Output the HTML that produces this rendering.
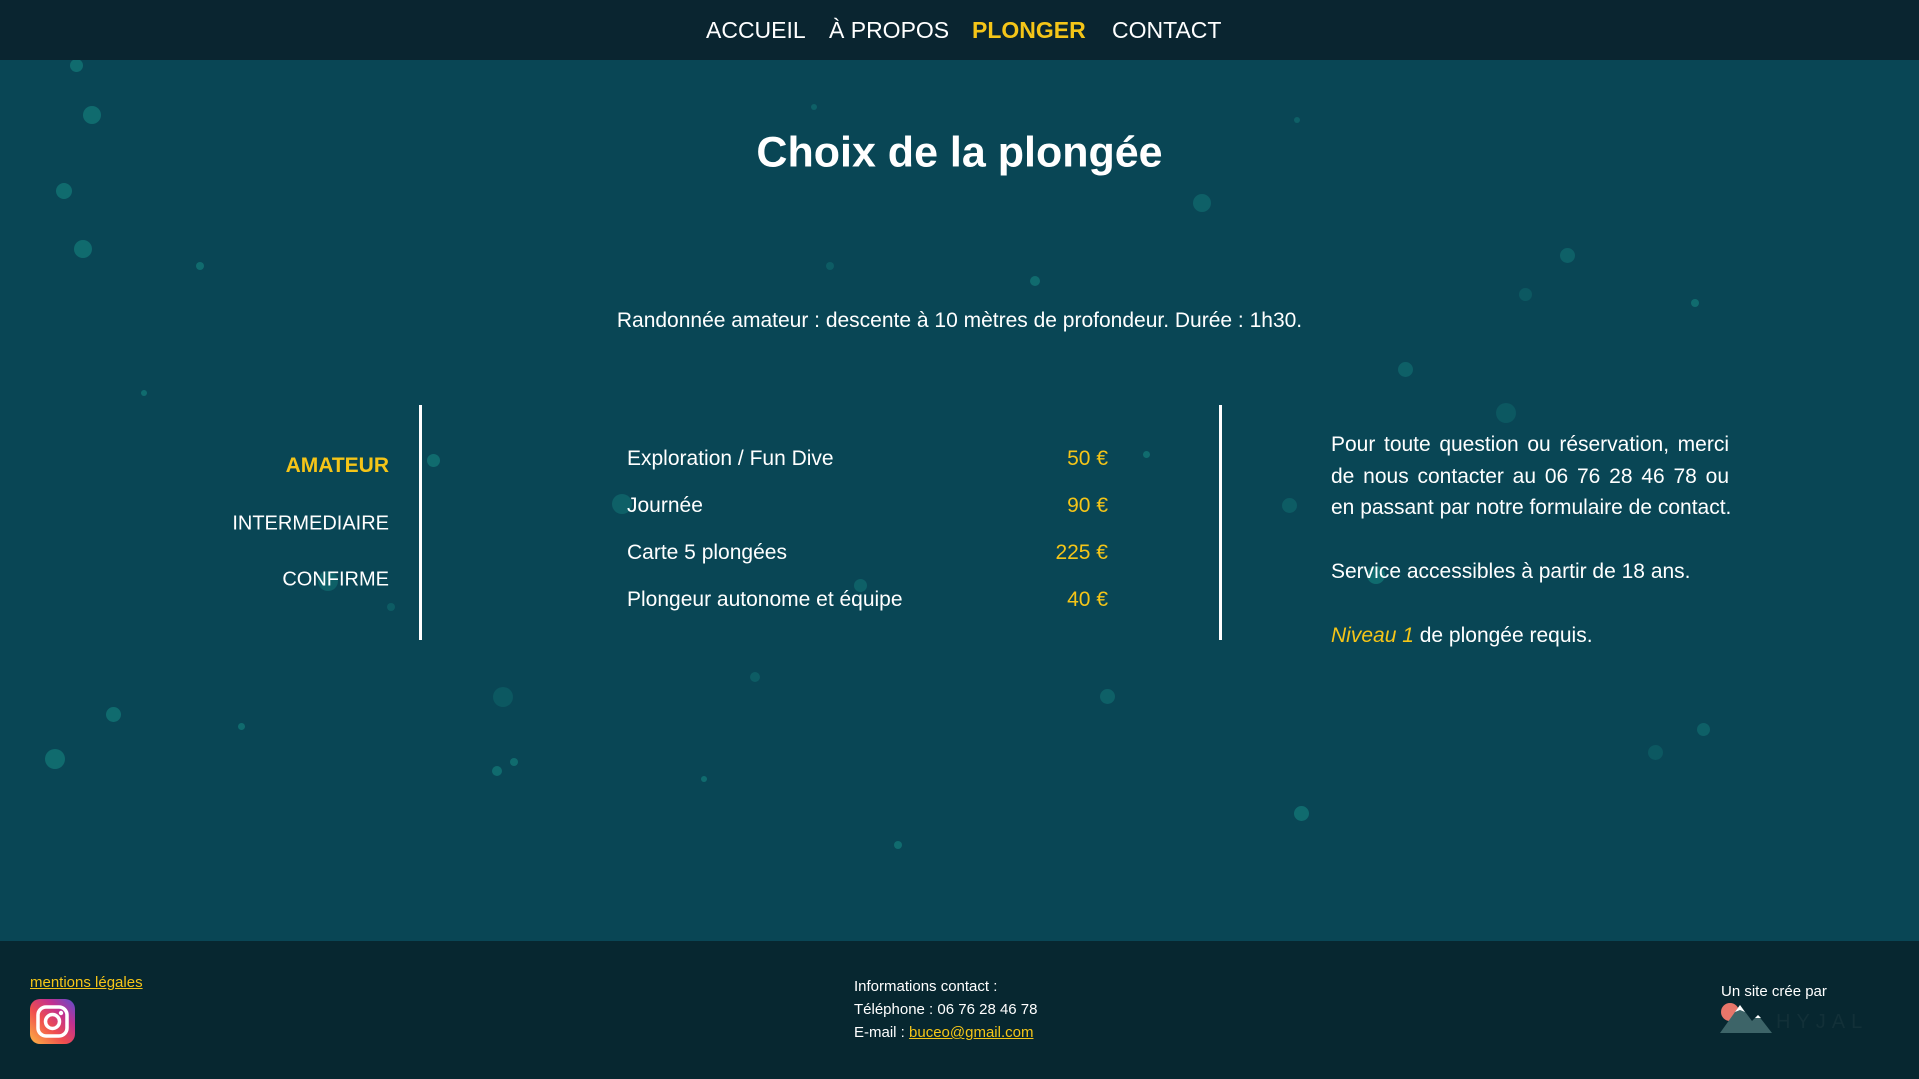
<!DOCTYPE html>
<html><head><meta charset="utf-8"><style>
*{margin:0;padding:0;box-sizing:border-box}
body{width:1919px;height:1079px;overflow:hidden;background:#094655;font-family:"Liberation Sans",sans-serif;color:#fff;position:relative}
.a{position:absolute;white-space:nowrap}
nav{position:absolute;left:0;top:0;width:1919px;height:60px;background:#0a2530}
.nv{font-size:23px;top:17px}
.y{color:#f5c518}
.b{position:absolute;border-radius:50%;background:#127273;opacity:.85}
.c{transform:translateY(-50%)}
.rt{position:absolute;left:1331px;width:398px;font-size:21px;text-align:justify;text-align-last:justify;white-space:nowrap}
footer{position:absolute;left:0;top:941px;width:1919px;height:138px;background:#072730}
.f{font-size:15px}
</style></head><body>
<div id="bubbles">
<div class="b" style="left:70px;top:59px;width:13px;height:13px"></div>
<div class="b" style="left:83px;top:106px;width:18px;height:18px"></div>
<div class="b" style="left:56px;top:183px;width:16px;height:16px"></div>
<div class="b" style="left:74px;top:240px;width:18px;height:18px"></div>
<div class="b" style="left:196px;top:262px;width:8px;height:8px"></div>
<div class="b" style="left:141px;top:390px;width:6px;height:6px"></div>
<div class="b" style="left:106px;top:707px;width:15px;height:15px"></div>
<div class="b" style="left:45px;top:749px;width:20px;height:20px"></div>
<div class="b" style="left:238px;top:723px;width:7px;height:7px"></div>
<div class="b" style="left:492px;top:766px;width:10px;height:10px"></div>
<div class="b" style="left:510px;top:758px;width:8px;height:8px"></div>
<div class="b" style="left:493px;top:687px;width:20px;height:20px;opacity:.4"></div>
<div class="b" style="left:701px;top:776px;width:6px;height:6px"></div>
<div class="b" style="left:750px;top:672px;width:10px;height:10px;opacity:.5"></div>
<div class="b" style="left:894px;top:841px;width:8px;height:8px"></div>
<div class="b" style="left:1100px;top:689px;width:15px;height:15px;opacity:.6"></div>
<div class="b" style="left:1294px;top:806px;width:15px;height:15px"></div>
<div class="b" style="left:1648px;top:745px;width:15px;height:15px;opacity:.4"></div>
<div class="b" style="left:1697px;top:723px;width:13px;height:13px;opacity:.6"></div>
<div class="b" style="left:1691px;top:299px;width:8px;height:8px"></div>
<div class="b" style="left:1560px;top:248px;width:15px;height:15px;opacity:.6"></div>
<div class="b" style="left:1519px;top:288px;width:13px;height:13px;opacity:.4"></div>
<div class="b" style="left:1398px;top:362px;width:15px;height:15px;opacity:.6"></div>
<div class="b" style="left:1496px;top:403px;width:20px;height:20px;opacity:.4"></div>
<div class="b" style="left:1193px;top:194px;width:18px;height:18px;opacity:.6"></div>
<div class="b" style="left:1030px;top:276px;width:10px;height:10px"></div>
<div class="b" style="left:826px;top:262px;width:8px;height:8px;opacity:.5"></div>
<div class="b" style="left:1294px;top:117px;width:6px;height:6px;opacity:.6"></div>
<div class="b" style="left:811px;top:104px;width:6px;height:6px;opacity:.6"></div>
<div class="b" style="left:427px;top:454px;width:13px;height:13px"></div>
<div class="b" style="left:1143px;top:451px;width:7px;height:7px"></div>
<div class="b" style="left:612px;top:494px;width:20px;height:20px;opacity:.6"></div>
<div class="b" style="left:854px;top:579px;width:13px;height:13px;opacity:.6"></div>
<div class="b" style="left:1282px;top:498px;width:15px;height:15px;opacity:.5"></div>
<div class="b" style="left:1367px;top:566px;width:18px;height:18px"></div>
<div class="b" style="left:318px;top:571px;width:20px;height:20px;opacity:.6"></div>
<div class="b" style="left:387px;top:603px;width:8px;height:8px;opacity:.5"></div>
</div>
<nav>
<div class="a nv" style="left:706px">ACCUEIL</div>
<div class="a nv" style="left:829px">À PROPOS</div>
<div class="a nv y" style="left:972px;font-weight:bold">PLONGER</div>
<div class="a nv" style="left:1112px">CONTACT</div>
</nav>
<div class="a c" style="left:0;width:1919px;text-align:center;top:153px;font-size:43px;font-weight:bold">Choix de la plongée</div>
<div class="a c" style="left:0;width:1919px;text-align:center;top:321px;font-size:21px">Randonnée amateur : descente à 10 mètres de profondeur. Durée : 1h30.</div>
<div class="a c y" style="right:1530px;top:466px;font-size:21px;font-weight:bold">AMATEUR</div>
<div class="a c" style="right:1530px;top:524px;font-size:20px">INTERMEDIAIRE</div>
<div class="a c" style="right:1530px;top:580px;font-size:20px">CONFIRME</div>
<div class="a" style="left:419px;top:405px;width:3px;height:235px;background:#fff"></div>
<div class="a" style="left:1219px;top:405px;width:3px;height:235px;background:#fff"></div>
<div class="a c" style="left:627px;top:459px;font-size:21px">Exploration / Fun Dive</div>
<div class="a c" style="left:627px;top:506px;font-size:21px">Journée</div>
<div class="a c" style="left:627px;top:553px;font-size:21px">Carte 5 plongées</div>
<div class="a c" style="left:627px;top:600px;font-size:21px">Plongeur autonome et équipe</div>
<div class="a c y" style="right:811px;top:459px;font-size:21px">50 €</div>
<div class="a c y" style="right:811px;top:506px;font-size:21px">90 €</div>
<div class="a c y" style="right:811px;top:553px;font-size:21px">225 €</div>
<div class="a c y" style="right:811px;top:600px;font-size:21px">40 €</div>
<div class="rt c" style="top:445px">Pour toute question ou réservation, merci</div>
<div class="rt c" style="top:477px">de nous contacter au 06 76 28 46 78 ou</div>
<div class="rt c" style="top:508px">en passant par notre formulaire de contact.</div>
<div class="a c" style="left:1331px;top:572px;font-size:21px">Service accessibles à partir de 18 ans.</div>
<div class="a c" style="left:1331px;top:636px;font-size:21px"><i class="y">Niveau 1</i> de plongée requis.</div>
<footer>
<div class="a f y" style="left:30px;top:33px;text-decoration:underline">mentions légales</div>
<svg class="a" style="left:30px;top:58px" width="45" height="45" viewBox="0 0 45 45">
<defs><linearGradient id="g" x1="0" y1="1" x2="1" y2="0"><stop offset="0" stop-color="#fdb744"/><stop offset=".4" stop-color="#f04e4e"/><stop offset=".7" stop-color="#c23090"/><stop offset="1" stop-color="#5a4fd0"/></linearGradient></defs>
<rect width="45" height="45" rx="10" fill="url(#g)"/>
<rect x="8" y="8" width="29" height="29" rx="8" fill="none" stroke="#fff" stroke-width="3.5"/>
<circle cx="22.5" cy="22.5" r="7" fill="none" stroke="#fff" stroke-width="3.5"/>
<circle cx="31" cy="14" r="2.2" fill="#fff"/></svg>
<div class="a f" style="left:854px;top:37px">Informations contact :</div>
<div class="a f" style="left:854px;top:60px">Téléphone : 06 76 28 46 78</div>
<div class="a f" style="left:854px;top:83px">E-mail : <span class="y" style="text-decoration:underline">buceo@gmail.com</span></div>
<div class="a f" style="left:1721px;top:42px">Un site crée par</div>
<svg class="a" style="left:1718px;top:60px" width="150" height="34" viewBox="0 0 150 34">
<circle cx="12" cy="11" r="9" fill="#e8766a"/>
<polygon points="2,32 22,4 34,20 40,14 54,32" fill="#3d6468"/>
<polygon points="17,11 22,4 27,11 22,9" fill="#fff"/>
<polygon points="37,17 40,14 43,17" fill="#fff"/>
<text x="58" y="27" font-size="20" fill="#123038" letter-spacing="6" font-family="Liberation Sans">HYJAL</text>
</svg>
</footer>
</body></html>
